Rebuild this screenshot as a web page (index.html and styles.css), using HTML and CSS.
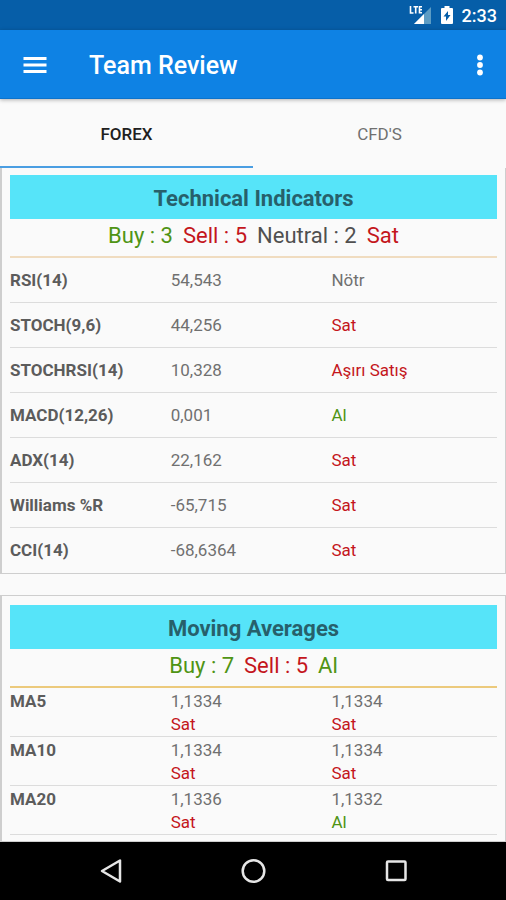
FILE: index.html
```html
<!DOCTYPE html>
<html lang="en">
<head>
<meta charset="utf-8">
<meta name="viewport" content="width=device-width, initial-scale=1">
<title>Team Review</title>
<link rel="stylesheet" href="styles.css">
</head>
<body>
<div class="status">
  <svg class="signal" width="24" height="20" viewBox="0 0 24 20" aria-hidden="true">
    <path d="M22 2v17H5z" fill="#5c9cc4"/>
    <path d="M15 9v10H5z" fill="#fff"/>
    <path d="M1.500 1v7H4.500M4.500 1.700h4.500M6.700 1.700V8.500M13 1.700h-2.500v6H13M10.500 4.700H13" fill="none" stroke="#fff" stroke-width="1.600"/>
  </svg>
  <svg class="battery" width="12" height="18" viewBox="0 0 12 18" aria-hidden="true">
    <path d="M3.500 0h5v2H11q1 0 1 1v14q0 1-1 1H1q-1 0-1-1V3q0-1 1-1h2.500z" fill="#fff"/>
    <path d="M7 5v4h2.500L5 15v-4.500H2.500z" fill="#065ea8"/>
  </svg>
  <time>2:33</time>
</div>
<header class="appbar">
  <button class="icon-button" type="button" aria-label="Menu">
    <svg width="24" height="18" viewBox="0 0 24 18"><path d="M0.500 2.500h23M0.500 9h23M0.500 15.500h23" stroke="#fff" stroke-width="3"/></svg>
  </button>
  <h1>Team Review</h1>
  <button class="icon-button" type="button" aria-label="More options">
    <svg width="6" height="22" viewBox="0 0 6 22" fill="#fff"><circle cx="3" cy="3.500" r="2.900"/><circle cx="3" cy="11" r="2.900"/><circle cx="3" cy="18.500" r="2.900"/></svg>
  </button>
</header>
<nav class="tabs" aria-label="Markets">
  <button class="tab active" type="button">FOREX</button>
  <button class="tab" type="button">CFD'S</button>
</nav>
<main>
  <section class="card technical">
    <h2>Technical Indicators</h2>
    <p class="summary"><span class="buy">Buy : 3</span><span class="sell">Sell : 5</span><span>Neutral : 2</span><span class="sell">Sat</span></p>
    <table>
      <tr><th scope="row">RSI(14)</th><td>54,543</td><td>Nötr</td></tr>
      <tr><th scope="row">STOCH(9,6)</th><td>44,256</td><td class="sell">Sat</td></tr>
      <tr><th scope="row">STOCHRSI(14)</th><td>10,328</td><td class="sell">Aşırı Satış</td></tr>
      <tr><th scope="row">MACD(12,26)</th><td>0,001</td><td class="buy">Al</td></tr>
      <tr><th scope="row">ADX(14)</th><td>22,162</td><td class="sell">Sat</td></tr>
      <tr><th scope="row">Williams %R</th><td>-65,715</td><td class="sell">Sat</td></tr>
      <tr><th scope="row">CCI(14)</th><td>-68,6364</td><td class="sell">Sat</td></tr>
    </table>
  </section>
  <section class="card averages">
    <h2>Moving Averages</h2>
    <p class="summary"><span class="buy">Buy : 7</span><span class="sell">Sell : 5</span><span class="buy">Al</span></p>
    <table>
      <tr><th scope="row">MA5</th><td>1,1334<br><span class="sell">Sat</span></td><td>1,1334<br><span class="sell">Sat</span></td></tr>
      <tr><th scope="row">MA10</th><td>1,1334<br><span class="sell">Sat</span></td><td>1,1334<br><span class="sell">Sat</span></td></tr>
      <tr><th scope="row">MA20</th><td>1,1336<br><span class="sell">Sat</span></td><td>1,1332<br><span class="buy">Al</span></td></tr>
    </table>
  </section>
</main>
<footer class="navbar">
  <button type="button" aria-label="Back"><svg width="24" height="26" viewBox="0 0 24 26"><path d="M22 2.500v21L4 13z"/></svg></button>
  <button type="button" aria-label="Home"><svg width="26" height="26" viewBox="0 0 26 26"><circle cx="13.500" cy="13" r="10.800"/></svg></button>
  <button type="button" aria-label="Recent apps"><svg width="24" height="26" viewBox="0 0 24 26"><rect x="3" y="3.500" width="18.500" height="18.500" rx="1"/></svg></button>
</footer>
</body>
</html>
```
FILE: styles.css
```css
* { box-sizing: border-box; }
body {
  margin: 0;
  height: 100vh;
  display: flex;
  flex-direction: column;
  background: #fafafa;
  color: #505050;
  font-family: Roboto, sans-serif;
}
button {
  border: 0;
  padding: 0;
  background: none;
  font: inherit;
  color: inherit;
}
h1, h2, p { margin: 0; }
svg { display: block; }

.status {
  flex: none;
  height: 30px;
  padding: 0 9px;
  display: flex;
  align-items: center;
  justify-content: flex-end;
  background: #065ea8;
  color: #fff;
  font-size: 18px;
  font-weight: 500;
}
.battery { margin: 0 9px 0 8px; }

.appbar {
  flex: none;
  height: 69px;
  padding: 1px 10px 0 8px;
  display: flex;
  align-items: center;
  background: #0e82e4;
  color: #fff;
  border-bottom: 1px solid #0b73cc;
  box-shadow: 0 1px 4px rgba(0, 0, 0, 0.3);
}
.appbar h1 {
  flex: 1;
  padding: 2px 0 0 28px;
  font-size: 25px;
  font-weight: 500;
}
.icon-button {
  height: 48px;
  width: 53px;
  display: grid;
  place-items: center;
}
.icon-button:last-child { width: 32px; }

.tabs {
  flex: none;
  height: 69px;
  display: flex;
}
.tab {
  flex: 1;
  padding-top: 2px;
  border-bottom: 2px solid transparent;
  font-size: 17px;
  color: #707070;
}
.tab.active {
  color: #202020;
  font-weight: 500;
  border-color: #4a9ee2;
}

main {
  flex: 1;
  min-height: 0;
  display: flex;
  flex-direction: column;
  gap: 21px;
  overflow: hidden;
}
.card {
  border: solid #cecece;
  border-width: 1px 1px 1px 2px;
  padding: 9px 8px 0;
}
.technical {
  border-top: 0;
  padding-top: 7px;
}
.averages { flex: 1; }
.card h2 {
  height: 44px;
  line-height: 47px;
  background: #56e4f9;
  color: #27606b;
  font-size: 22px;
  font-weight: 700;
  text-align: center;
}
.summary {
  height: 39px;
  display: flex;
  justify-content: center;
  gap: 10px;
  font-size: 22px;
  line-height: 34px;
  border-bottom: 2px solid #f0dcc0;
}
.averages .summary { border-color: #ecca7c; }
.buy { color: #4f9414; }
.sell { color: #c4161c; }

table {
  width: 100%;
  table-layout: fixed;
  border-spacing: 0;
  font-size: 17px;
  line-height: 23px;
}
th, td {
  width: 33%;
  padding: 0;
  text-align: left;
  border-bottom: 1px solid #dcdcdc;
}
td:last-child { width: 34%; }
th {
  font-weight: 700;
  color: #5c5c5c;
}
td:not([class]) { color: #707070; }
.technical td, .technical th { height: 45px; }
.technical tr:last-child > * { border-bottom: 0; }
.averages td, .averages th {
  padding-top: 2px;
  vertical-align: top;
}

.navbar {
  flex: none;
  height: 58px;
  padding: 0 39px;
  display: flex;
  background: #000;
}
.navbar button {
  flex: 1;
  display: grid;
  place-items: center;
}
.navbar svg {
  fill: none;
  stroke: #e6e6e6;
  stroke-width: 2.5;
  stroke-linejoin: round;
}
```
